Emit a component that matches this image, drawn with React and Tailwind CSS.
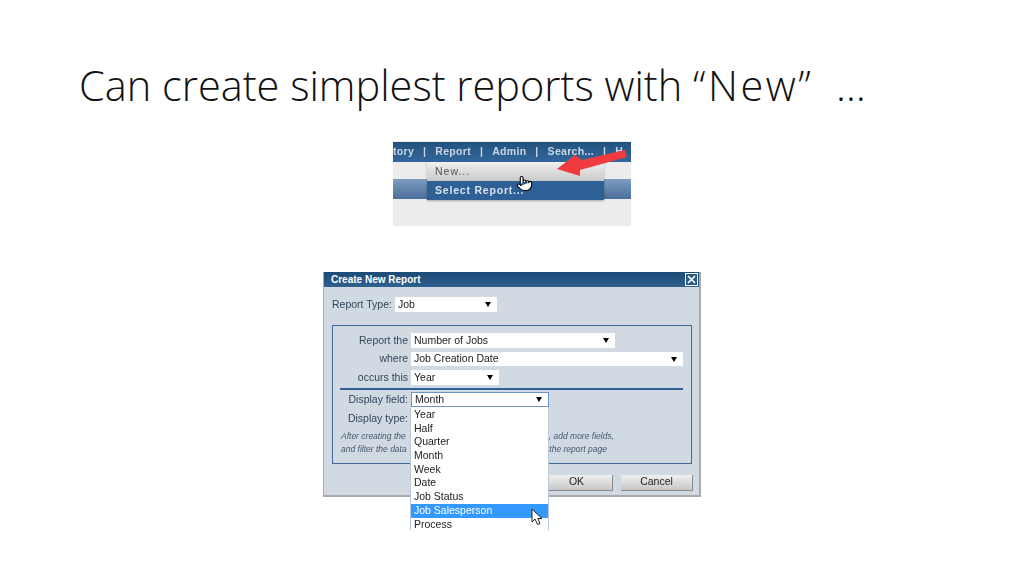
import React from 'react'
import { Pointer } from 'lucide-react'

const arial = "font-['Liberation_Sans',Arial,sans-serif]"

function Select({ className, text, arrow = true }) {
    return (
        <div className={`flex items-center justify-between bg-white pl-[3px] pr-[6px] pt-[1px] text-[#222] ${className}`}>
            <span>{text}</span>
            {arrow && <span className="h-0 w-0 border-x-[3px] border-t-[5px] border-x-transparent border-t-black"></span>}
        </div>
    )
}

function Row({ label, className, children }) {
    return (
        <div className={`flex items-center ${className}`}>
            <div className="w-[75px] shrink-0 pt-[1px] text-right text-[#33465c]">{label}</div>
            <div className="ml-[3px]">{children}</div>
        </div>
    )
}

function MenuCrop() {
    return (
        <div className={`relative ml-[393px] mt-[29px] h-[85px] w-[238px] overflow-hidden bg-[#ececec] blur-[0.3px] ${arial}`}>
            <div className="mt-[1px] flex h-[20px] items-center gap-[9px] bg-gradient-to-b from-[#22527f] to-[#33689c] text-[10.5px] font-bold tracking-[0.3px] text-[#c9d6e4]">
                <span>tory</span><span>|</span><span>Report</span><span>|</span><span>Admin</span><span>|</span><span>Search...</span><span>|</span><span>H</span>
            </div>
            <div className="mt-[17px] h-[20px] bg-gradient-to-b from-[#7d9cc0] to-[#4a6f9a]"></div>
            <div className="absolute left-[34px] top-[21px] w-[177px] shadow-[0_1px_2px_rgba(0,0,0,0.3)]">
                <div className="flex h-[19px] items-center bg-gradient-to-b from-[#f0f0f0] to-[#c9c9c9] pl-[8px] text-[10.5px] tracking-[1px] text-[#555]">New...</div>
                <div className="flex h-[19px] items-center bg-[#2e6095] pl-[8px] text-[10.5px] font-bold tracking-[0.8px] text-[#d9e3ee]">Select Report...</div>
            </div>
            <Pointer className="absolute left-[123px] top-[34px]" size={17} fill="white" color="black" strokeWidth={1.5} />
            <svg className="absolute left-0 top-0" width="238" height="85" viewBox="0 0 238 85">
                <polygon points="164,28 182,14 189,19 232,9 234,16 187,29 187,35" fill="#ef3b3f" />
            </svg>
        </div>
    )
}

function Dialog() {
    return (
        <div className={`relative ml-[323px] mt-[46px] h-[225px] w-[378px] border-b-2 border-l border-r-2 border-[#a9a9a9] bg-[#d1d9e3] blur-[0.3px] text-[10.5px] ${arial}`}>
            <div className="flex h-[15px] items-center justify-between bg-gradient-to-b from-[#1d4a77] to-[#2f618f] pl-[7px] pr-[1px] text-[10px] font-bold text-white">
                <span>Create New Report</span>
                <span className="flex h-[13px] w-[13px] items-center justify-center border border-white bg-[#2a5a88]">
                    <svg width="9" height="9" viewBox="0 0 9 9"><path d="M1 1L8 8M8 1L1 8" stroke="white" strokeWidth="1.7" /></svg>
                </span>
            </div>

            <div className="mt-[9px] flex items-center pl-[8px]">
                <span className="pt-[1px] text-[#33465c]">Report Type:</span>
                <Select className="ml-[3px] h-[15px] w-[102px]" text="Job" />
            </div>

            <div className="ml-[8px] mt-[12px] h-[139px] w-[360px] border-[1.5px] border-[#3f6a98] pt-[7px]">
                <Row label="Report the" className="h-[15px]"><Select className="h-[15px] w-[204px]" text="Number of Jobs" /></Row>
                <Row label="where" className="mt-[4px] h-[14px]"><Select className="h-[14px] w-[272px]" text="Job Creation Date" /></Row>
                <Row label="occurs this" className="mt-[4px] h-[15px]"><Select className="h-[15px] w-[88px]" text="Year" /></Row>
                <div className="ml-[7px] mt-[3px] h-[2px] w-[343px] bg-[#2f6098]"></div>
                <Row label="Display field:" className="mt-[2px] h-[15px]"><Select className="h-[15px] w-[138px] border border-[#6b93c4]" text="Month" /></Row>
                <Row label="Display type:" className="mt-[4px] h-[15px]"><span></span></Row>
                <div className="ml-[8px] mt-[4px] w-[273px] text-[8.5px] italic leading-[13px] text-[#44586e]">
                    <div className="flex justify-between"><span>After creating the</span><span>, add more fields,</span></div>
                    <div className="flex w-[266px] justify-between"><span>and filter the data</span><span>the report page</span></div>
                </div>
            </div>

            <div className="mt-[11px] flex justify-end gap-[8px] pr-[6px]">
                <div className="flex h-[16px] w-[72px] items-center justify-center border-b border-r border-[#8a8a8a] bg-gradient-to-b from-[#f0f0f0] to-[#c8c8c8] text-[#222]">OK</div>
                <div className="flex h-[16px] w-[72px] items-center justify-center border-b border-r border-[#8a8a8a] bg-gradient-to-b from-[#f0f0f0] to-[#c8c8c8] text-[#222]">Cancel</div>
            </div>

            <div className="absolute left-[86px] top-[135px] flex h-[123px] w-[139px] flex-col border-x border-[#b9c8dc] bg-white pt-[1px] leading-[13.7px] text-[#222]">
                {['Year', 'Half', 'Quarter', 'Month', 'Week', 'Date', 'Job Status'].map((item) => (
                    <div key={item} className="h-[13.7px] pl-[3px]">{item}</div>
                ))}
                <div className="h-[13.7px] bg-[#3399ff] pl-[3px] text-white">Job Salesperson</div>
                <div className="h-[13.7px] pl-[3px]">Process</div>
            </div>
            <svg className="absolute left-[207px] top-[236px]" width="13" height="18" viewBox="0 0 13 18">
                <path d="M1 1V14L4 11L6.5 16.5L9 15.5L6.8 10.5H11Z" fill="white" stroke="#222" strokeWidth="1" />
            </svg>
        </div>
    )
}

export default function App() {
    return (
        <div className="h-[576px] w-[1024px] overflow-hidden bg-white">
            <h1 className="pl-[79px] pt-[58px] text-[41.5px] font-light leading-[54px] text-[#111] font-['Open_Sans',sans-serif]">
                Can create simplest reports with <span className="tracking-[2.5px]">“New”</span> <span className="ml-[12px] tracking-[3px]">…</span>
            </h1>
            <MenuCrop />
            <Dialog />
        </div>
    )
}
